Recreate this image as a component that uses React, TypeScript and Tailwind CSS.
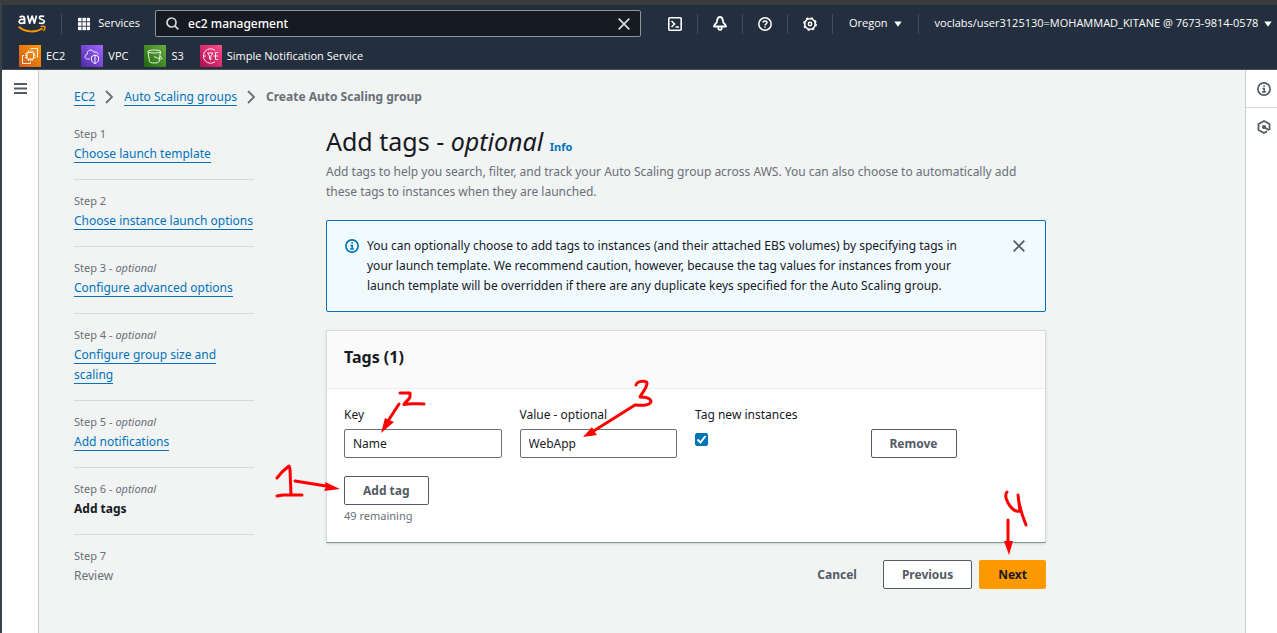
import { useState } from "react";
import type { ReactNode } from "react";

const steps: { n: number; title: string; optional?: boolean; state: "link" | "current" | "todo" }[] = [
  { n: 1, title: "Choose launch template", state: "link" },
  { n: 2, title: "Choose instance launch options", state: "link" },
  { n: 3, title: "Configure advanced options", optional: true, state: "link" },
  { n: 4, title: "Configure group size and scaling", optional: true, state: "link" },
  { n: 5, title: "Add notifications", optional: true, state: "link" },
  { n: 6, title: "Add tags", optional: true, state: "current" },
  { n: 7, title: "Review", state: "todo" },
];

const linkClass = "border-b border-[#0073bb] text-[#0073bb]";
const buttonClass =
  "h-[29px] rounded-[2px] border border-[#545b64] bg-white px-[18px] text-[12px] leading-5 font-bold text-[#545b64]";
const fieldClass =
  "h-[29px] w-full rounded-[2px] border border-[#687078] bg-white px-2 text-[12px] text-[#16191f]";

function AwsLogo() {
  return (
    <svg width="28" height="20" viewBox="0 0 28 20" fill="none" aria-hidden="true">
      <g stroke="#fff" strokeWidth="1.7" strokeLinejoin="round">
        <path d="M1.6 3.2C3.4 1.9 6.6 2 6.6 4.6V10M6.6 5.6C4.2 5 1.2 5.2 1.2 7.6 1.2 10 5 10 6.6 7.6" />
        <path d="M9.6 1.6 11.7 9.2 14.1 2 16.4 9.2 18.5 1.6" />
        <path d="M26.2 2.6C24.2 1.6 21.4 1.9 21.4 3.8 21.4 6 26.4 5.1 26.4 7.6 26.4 9.7 23 9.8 20.9 8.7" />
      </g>
      <path d="M.6 12.8C7.8 18.6 17.6 18.8 24.6 14.6" stroke="#f90" strokeWidth="1.8" />
      <path d="M22.6 12.7C24.6 12.1 26.4 12.2 26.9 12.7 27.2 13.6 26.6 15.6 25.4 17" stroke="#f90" strokeWidth="1.4" />
    </svg>
  );
}

function GridIcon() {
  return (
    <svg width="14" height="14" viewBox="0 0 14 14" fill="#fff" aria-hidden="true">
      {[0, 5, 10].map((y) => [0, 5, 10].map((x) => <rect key={`${x}-${y}`} x={x} y={y} width="4" height="4" />))}
    </svg>
  );
}

function Caret() {
  return (
    <svg width="8" height="6" viewBox="0 0 8 6" fill="#fff" aria-hidden="true">
      <path d="M.3.5h7.4L4 5.8Z" />
    </svg>
  );
}

function CloseIcon() {
  return (
    <svg width="12" height="12" viewBox="0 0 12 12" fill="none" stroke="currentColor" strokeWidth="1.7" aria-hidden="true">
      <path d="m.7.7 10.600 10.600M11.300.7.7 11.300" />
    </svg>
  );
}

function InfoIcon() {
  return (
    <svg width="14" height="14" viewBox="0 0 16 16" fill="none" stroke="currentColor" strokeWidth="1.9" aria-hidden="true">
      <circle cx="8" cy="8" r="7" />
      <path d="M6.2 7.4h2V11M5.8 11.4h4.4M7.2 4.6h1.9" strokeWidth="1.8" />
    </svg>
  );
}

function ServiceIcon({ name }: { name: string }) {
  const art: Record<string, ReactNode> = {
    EC2: (
      <>
        <rect width="22" height="22" fill="url(#ec2)" stroke="none" />
        <path d="M8 7.500h6.500V14H8zM9.500 5.500v2m1.800-2v2m1.800-2v2M9.500 14v2m1.800-2v2m1.800-2v2M6 9h2m-2 1.800h2m-2 1.800h2M14.500 9h2m-2 1.800h2m-2 1.800h2M12 4.500v-1h6.500V12H17.500M5 10.500H3.500v8h8V17" />
      </>
    ),
    VPC: (
      <>
        <rect width="22" height="22" fill="url(#vpc)" stroke="none" />
        <path d="M9 14H6.500C3.500 14 3 9.800 6.200 9.300 6 4.500 11 3.500 13 7.300c2-1 4 .2 4 2.200M10.500 11.500 14 10l3.500 1.500V15c0 1.500-2 3-3.500 3.500-1.500-.5-3.500-2-3.500-3.500ZM14 10v8.500" />
      </>
    ),
    S3: (
      <>
        <rect width="22" height="22" fill="url(#s3)" stroke="none" />
        <path d="M4 6.500C4 4.500 16.500 4.500 16.500 6.500S4 8.500 4 6.500Zm0 0L5.500 16.500c.5 2 9 2 9.500 0L16.500 6.500M10 11.500c2 1 7.500 3.500 8 2 .3-.8-.8-1.500-2-2.300" />
      </>
    ),
    SNS: (
      <>
        <rect width="22" height="22" fill="url(#sns)" stroke="none" />
        <path d="M15 5.300A7.200 7.200 0 1 0 15 16.700M4 11h2m1.500-3h5.500L10.800 11v4l-1.300-1v-3ZM13.500 11h4.500M15.500 7.500V14.500M15.500 7.500h2.500M15.500 14.500h2.500" />
      </>
    ),
  };
  return (
    <svg width="22" height="22" viewBox="0 0 22 22" fill="none" stroke="#fff" strokeWidth=".9" aria-hidden="true">
      {art[name]}
    </svg>
  );
}

function Gradients() {
  const stops = [
    ["ec2", "#d0591a", "#f90"],
    ["vpc", "#4d27a8", "#a166ff"],
    ["s3", "#1b660f", "#6cae3e"],
    ["sns", "#b0084d", "#ff4f8b"],
  ];
  return (
    <svg width="0" height="0" className="absolute" aria-hidden="true">
      <defs>
        {stops.map(([id, from, to]) => (
          <linearGradient key={id} id={id} x1="0" y1="1" x2="1" y2="0">
            <stop stopColor={from} />
            <stop offset="1" stopColor={to} />
          </linearGradient>
        ))}
      </defs>
    </svg>
  );
}

function Chevron() {
  return (
    <svg width="9" height="14" viewBox="0 0 9 14" fill="none" stroke="#687078" strokeWidth="1.8" aria-hidden="true">
      <path d="m1 1 6 6-6 6" />
    </svg>
  );
}

const separator = "h-5 w-px shrink-0 bg-[#414d5c]";

function Header() {
  const [query, setQuery] = useState("ec2 management");
  return (
    <header className="border-b border-[#4a505c] bg-[#232f3e] font-['Open_Sans',sans-serif] text-[11px] font-medium text-white">
      <div className="flex h-[37px] items-center pr-3 pl-4">
        <a href="#home" aria-label="AWS home"><AwsLogo /></a>
        <span className={`${separator} ml-[15px]`} />
        <button className="ml-4 flex w-[62px] shrink-0 items-center gap-2">
          <GridIcon />
          Services
        </button>
        <label className="ml-[15px] flex h-[27px] w-[486px] shrink-0 items-center rounded-[2px] border border-[#8d9596] bg-[#161a22] px-[10px]">
          <svg width="13" height="13" viewBox="0 0 13 13" fill="none" stroke="#d5dbdb" strokeWidth="1.7" aria-hidden="true">
            <circle cx="5.500" cy="5.500" r="4.500" />
            <path d="m8.700 8.700 3.600 3.600" />
          </svg>
          <input
            aria-label="Search"
            className="ml-[9px] min-w-0 flex-1 bg-transparent font-['Noto_Sans',sans-serif] text-[12px] outline-none"
            value={query}
            onChange={(e) => setQuery(e.target.value)}
          />
          <button aria-label="Clear search" className="text-[#d5dbdb]" onClick={() => setQuery("")}>
            <CloseIcon />
          </button>
        </label>
        <div className="ml-3 flex items-center whitespace-nowrap">
          <button aria-label="CloudShell" className="flex w-11 justify-center">
            <svg width="14" height="14" viewBox="0 0 14 14" fill="none" stroke="#fff" strokeWidth="1.600" aria-hidden="true">
              <rect x=".8" y=".8" width="12.400" height="12.400" rx="1" />
              <path d="m3.500 4 3 3-3 3M7.500 10h3.500" />
            </svg>
          </button>
          <span className={separator} />
          <button aria-label="Notifications" className="flex w-11 justify-center">
            <svg width="14" height="15" viewBox="0 0 14 15" fill="none" stroke="#fff" strokeWidth="1.800" strokeLinejoin="round" aria-hidden="true">
              <path d="M7 1C4.500 1 4.200 3 4 5.500 3.800 7.500 1 8.500 1 10.500h12c0-2-2.800-3-3-5C9.800 3 9.500 1 7 1ZM5.300 11v1.500c0 1.800 3.400 1.800 3.400 0V11" />
            </svg>
          </button>
          <span className={separator} />
          <button aria-label="Support" className="flex w-11 justify-center">
            <svg width="14" height="14" viewBox="0 0 14 14" fill="none" stroke="#fff" strokeWidth="1.500" aria-hidden="true">
              <circle cx="7" cy="7" r="6.200" />
              <path d="M5 5.600C5 3.300 9 3.300 9 5.600 9 7 7 6.800 7 8.600M7 9.500v1.300" />
            </svg>
          </button>
          <span className={separator} />
          <button aria-label="Settings" className="flex w-11 justify-center">
            <svg width="14" height="14" viewBox="0 0 14 14" fill="none" stroke="#fff" aria-hidden="true">
              <circle cx="7" cy="7" r="5.300" strokeWidth="1.600" />
              <circle cx="7" cy="7" r="6.200" strokeWidth="1.400" strokeDasharray="2.400 2.470" />
              <circle cx="7" cy="7" r="1.700" strokeWidth="1.500" />
            </svg>
          </button>
          <span className={separator} />
          <button className="ml-4 flex items-center gap-[6px]">
            Oregon <Caret />
          </button>
          <span className={`${separator} ml-4`} />
          <button className="ml-4 flex items-center gap-[6px]">
            voclabs/user3125130=MOHAMMAD_KITANE @ 7673-9814-0578 <Caret />
          </button>
        </div>
      </div>
      <nav aria-label="Favorites" className="flex h-[27px] items-center gap-4 pl-[17px]">
        {[
          ["EC2", "EC2"],
          ["VPC", "VPC"],
          ["S3", "S3"],
          ["SNS", "Simple Notification Service"],
        ].map(([id, label]) => (
          <a key={id} href={`#${id}`} className="flex items-center gap-[5px] leading-4">
            <ServiceIcon name={id} />
            {label}
          </a>
        ))}
      </nav>
    </header>
  );
}

function StepList() {
  return (
    <ol className="w-[180px] shrink-0">
      {steps.map((s) => (
        <li key={s.n} className="mb-[13px] border-b border-[#d5dbdb] pb-[15px] last:border-b-0">
          <div className="text-[11px] leading-4 text-[#687078]">
            Step {s.n}
            {s.optional && <> - <i>optional</i></>}
          </div>
          <div className="mt-[2px] text-[12px] leading-5">
            {s.state === "link" && <a href={`#step-${s.n}`} className={linkClass}>{s.title}</a>}
            {s.state === "current" && <b className="text-[#16191f]">{s.title}</b>}
            {s.state === "todo" && <span className="text-[#687078]">{s.title}</span>}
          </div>
        </li>
      ))}
    </ol>
  );
}

function Marker({ className, width, height, stroke, line, head }: {
  className: string; width: number; height: number; stroke: string; line: string; head: string;
}) {
  return (
    <svg
      className={`pointer-events-none absolute z-10 ${className}`}
      width={width}
      height={height}
      viewBox={`0 0 ${width} ${height}`}
      fill="none"
      stroke="#f00"
      strokeWidth="3"
      strokeLinecap="round"
      strokeLinejoin="round"
      aria-hidden="true"
    >
      <path d={stroke} />
      <path d={line} />
      <path d={head} fill="#f00" stroke="none" />
    </svg>
  );
}

function TagsPanel() {
  const [key, setKey] = useState("Name");
  const [value, setValue] = useState("WebApp");
  return (
    <section className="mt-[18px] border border-[#d5dbdb] border-b-[#879596] bg-white shadow-sm">
      <h2 className="border-b border-[#eaeded] bg-[#fafafa] px-[17px] pt-[14px] pb-[19px] text-[16px] leading-6 font-bold">
        Tags (1)
      </h2>
      <div className="px-[17px] pt-4 pb-[18px] text-[12px] leading-5">
        <div className="grid grid-cols-4 gap-x-[18px]">
          <div className="relative">
            <label htmlFor="tag-key">Key</label>
            <input id="tag-key" className={`${fieldClass} mt-1 block`} value={key} onChange={(e) => setKey(e.target.value)} />
            <Marker
              className="-top-4 left-9"
              width={48}
              height={46}
              stroke="M20 4H30V8C29 11 25 13 24 15.500 30 14 38 15 44 15"
              line="M19 15 8 32"
              head="M1 44 5 29 9 31 14 33Z"
            />
          </div>
          <div className="relative">
            <label htmlFor="tag-value">Value - optional</label>
            <input id="tag-value" className={`${fieldClass} mt-1 block`} value={value} onChange={(e) => setValue(e.target.value)} />
            <Marker
              className="-top-7 left-[60px]"
              width={76}
              height={64}
              stroke="M56 8C57 4 66 3 67 6 67 11 62 16 60 20 64 20 70 21 71 24 71 28 64 29 56 28"
              line="M55 28 12 55"
              head="M3 60 12 50 14 54 17 58Z"
            />
          </div>
          <div>
            <label htmlFor="tag-new">Tag new instances</label>
            <span className="relative mt-2 block size-[13px]">
              <input id="tag-new" type="checkbox" defaultChecked className="peer block size-[13px] appearance-none rounded-[2px] border border-[#687078] checked:border-[#0073bb] checked:bg-[#0073bb]" />
              <svg className="pointer-events-none absolute inset-0 hidden peer-checked:block" width="13" height="13" viewBox="0 0 13 13" fill="none" stroke="#fff" strokeWidth="2" aria-hidden="true">
                <path d="m2.500 6.500 3 3 5-6.500" />
              </svg>
            </span>
          </div>
          <div className="pt-6">
            <button className={buttonClass}>Remove</button>
          </div>
        </div>
        <div className="relative mt-[18px]">
          <button className={buttonClass}>Add tag</button>
          <Marker
            className="-top-3 -left-[70px]"
            width={68}
            height={36}
            stroke="M3 14 8 8 15 2 16 5 17 31M3 32C12 30 20 31 28 31"
            line="M21 17 52 22"
            head="M66 25 51 18 52 23 50 27Z"
          />
        </div>
        <p className="mt-[3px] text-[11px] leading-4 text-[#687078]">49 remaining</p>
      </div>
    </section>
  );
}

export default function App() {
  const [notice, setNotice] = useState(true);
  return (
    <div className="flex min-h-screen flex-col border-t-[5px] border-l-2 border-t-[#3b3b3b] border-l-[#3b4148] bg-[#f2f3f3] font-['Noto_Sans',sans-serif] text-[#16191f]">
      <Gradients />
      <Header />
      <div className="flex flex-1">
        <aside className="w-[37px] shrink-0 border-r border-[#c8cccc] bg-white">
          <button aria-label="Open navigation" className="mt-[11px] ml-[11px] block p-px">
            <svg width="13" height="13" viewBox="0 0 13 13" stroke="#545b64" strokeWidth="1.800" aria-hidden="true">
              <path d="M0 2h13M0 6.500h13M0 11h13" />
            </svg>
          </button>
        </aside>
        <main className="min-w-0 flex-1 px-[35px] pt-[17px] pb-3">
          <nav aria-label="Breadcrumb" className="flex items-center gap-[10px] text-[12px] leading-5">
            <a href="#ec2" className="border-b border-[#0073bb] leading-4 text-[#0073bb]">EC2</a>
            <Chevron />
            <a href="#groups" className="border-b border-[#0073bb] leading-4 text-[#0073bb]">Auto Scaling groups</a>
            <Chevron />
            <b className="text-[#687078]">Create Auto Scaling group</b>
          </nav>
          <div className="mt-[19px] flex gap-[72px]">
            <StepList />
            <div className="max-w-[720px] min-w-0 flex-1">
              <h1 className="text-[25px] leading-[30px]">
                Add tags - <i>optional</i>{" "}
                <a href="#info" className="text-[11px] font-bold text-[#0073bb]">Info</a>
              </h1>
              <p className="text-[12px] leading-5 text-[#687078]">
                Add tags to help you search, filter, and track your Auto Scaling group across AWS. You can also choose to
                automatically add these tags to instances when they are launched.
              </p>
              {notice && (
                <div className="mt-[18px] flex items-start rounded-[2px] border border-[#0073bb] bg-[#f1faff] px-[18px] py-[15px] text-[12px] leading-5">
                  <span className="mt-[3px] text-[#0073bb]"><InfoIcon /></span>
                  <p className="ml-2 max-w-[610px] flex-1">
                    You can optionally choose to add tags to instances (and their attached EBS volumes) by specifying tags
                    in your launch template. We recommend caution, however, because the tag values for instances from your
                    launch template will be overridden if there are any duplicate keys specified for the Auto Scaling group.
                  </p>
                  <button aria-label="Dismiss" className="mt-1 mr-[2px] ml-auto text-[#545b64]" onClick={() => setNotice(false)}>
                    <CloseIcon />
                  </button>
                </div>
              )}
              <TagsPanel />
              <div className="mt-[17px] flex justify-end gap-[7px] text-[12px]">
                <button className="h-[29px] px-[19px] font-bold text-[#545b64]">Cancel</button>
                <button className={buttonClass}>Previous</button>
                <div className="relative">
                  <button className="h-[29px] rounded-[2px] bg-[#f90] px-[19px] font-bold">Next</button>
                  <Marker
                    className="-top-[70px] left-6"
                    width={26}
                    height={66}
                    stroke="M4 2C1 5 4 12 7 16 10 20 14 22 17 21L15 5C16 18 20 27 23 35"
                    line="M5 30V54"
                    head="M6 65 1 51H10Z"
                  />
                </div>
              </div>
            </div>
          </div>
        </main>
        <aside className="w-8 shrink-0 border-l border-[#c8cccc] bg-white text-[#545b64]">
          <button aria-label="Info panel" className="flex h-[38px] w-full items-center justify-center border-b border-[#d5dbdb] pl-1">
            <InfoIcon />
          </button>
          <button aria-label="Tutorials panel" className="flex h-[37px] w-full items-center justify-center pl-1">
            <svg width="14" height="14" viewBox="0 0 14 14" fill="none" stroke="currentColor" strokeWidth="1.800" aria-hidden="true">
              <path d="M12.500 10V4L7 1 1.500 4v6L7 13l3-1.600M7 7l5 3.200" strokeLinejoin="round" />
              <circle cx="7" cy="7" r="1.200" fill="currentColor" />
            </svg>
          </button>
        </aside>
      </div>
    </div>
  );
}
